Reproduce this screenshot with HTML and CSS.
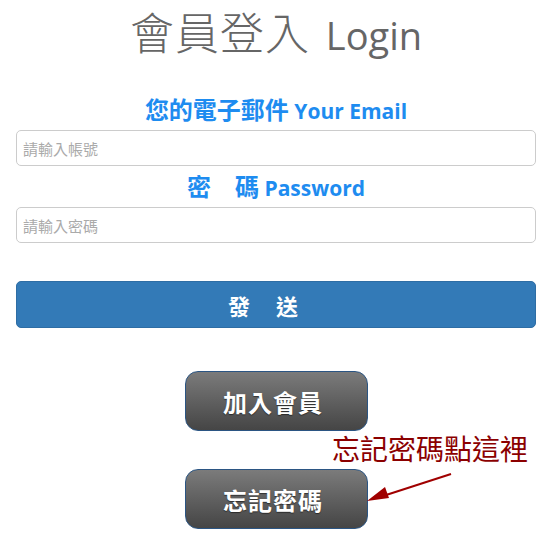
FILE: index.html
```html
<!DOCTYPE html>
<html lang="zh-Hant">
<head>
<meta charset="utf-8">
<title>會員登入</title>
<link rel="stylesheet" href="styles.css">
</head>
<body>
<div class="page">
  <h1 class="title"><span class="cjk">會員登入</span> Login</h1>
  <form class="form">
    <label class="label" for="email"><span class="cjk">您的電子郵件</span> Your Email</label>
    <input class="field field-email" id="email" type="text" placeholder="請輸入帳號">
    <label class="label label-pass" for="pass"><span class="cjk">密　碼</span> Password</label>
    <input class="field field-pass" id="pass" type="password" placeholder="請輸入密碼">
    <button class="send" type="button">發　送</button>
  </form>
  <div class="actions">
    <button class="gray-btn" type="button">加入會員</button>
    <div class="hint">忘記密碼點這裡</div>
    <button class="gray-btn" type="button">忘記密碼</button>
    <svg class="arrow" width="90" height="40" viewBox="0 0 90 40">
      <line x1="84" y1="3" x2="16" y2="25" stroke="#a00000" stroke-width="2"/>
      <polygon points="0,30 18,16 22,27" fill="#a00000"/>
    </svg>
  </div>
</div>
</body>
</html>
```
FILE: styles.css
```css
* { box-sizing: border-box; }
html, body { margin: 0; padding: 0; background: #fff; }
body {
  font-family: "Open Sans", "Noto Sans CJK TC", sans-serif;
}
.page {
  width: 520px;
  margin-left: 16px;
  padding-top: 11px;
  padding-bottom: 18px;
}
.title {
  margin: 0;
  height: 48px;
  text-align: center;
  font-size: 38px;
  line-height: 44px;
  font-weight: 400;
  color: #666;
}
.title .cjk {
  font-size: 44px;
  font-weight: 300;
  letter-spacing: 1px;
  margin-right: 6px;
}
.form {
  display: flex;
  flex-direction: column;
}
.label {
  display: block;
  height: 28px;
  text-align: center;
  font-size: 21px;
  line-height: 26px;
  font-weight: 700;
  color: #1e8cf0;
  margin-top: 38px;
}
.label .cjk { font-size: 24px; }
.label-pass { margin-top: 8px; }
.field {
  display: block;
  width: 520px;
  height: 36px;
  margin-top: 5px;
  padding: 0 6px;
  border: 1px solid #ccc;
  border-radius: 5px;
  font-family: "Noto Sans CJK TC", sans-serif;
  font-size: 15px;
  color: #555;
  background: #fff;
  outline: none;
}
.field-pass { margin-top: 5px; }
.field::placeholder { color: #aaa; }
.send {
  display: block;
  width: 520px;
  height: 47px;
  margin-top: 38px;
  border: 1px solid #2e6da4;
  border-radius: 5px;
  background: #337ab7;
  color: #fff;
  font-family: "Noto Sans CJK TC", sans-serif;
  font-size: 22px;
  font-weight: 700;
  letter-spacing: 2px;
  padding: 0 24px 0 0;
}
.actions {
  position: relative;
  display: flex;
  flex-direction: column;
  align-items: center;
  margin-top: 43px;
}
.gray-btn {
  width: 183px;
  height: 60px;
  border: 1px solid #2b5583;
  border-radius: 13px;
  background: linear-gradient(#7b7b7b, #454545);
  color: #fff;
  font-family: "Noto Sans CJK TC", sans-serif;
  font-size: 24px;
  font-weight: 700;
  letter-spacing: 1px;
  text-shadow: 0 1px 1px rgba(0,0,0,0.5);
  padding: 0 6px 0 0;
}
.hint {
  align-self: flex-end;
  height: 38px;
  padding-right: 8px;
  font-family: "Noto Sans CJK TC", sans-serif;
  font-size: 28px;
  line-height: 34px;
  color: #8b0000;
}
.arrow {
  position: absolute;
  left: 351px;
  top: 100px;
}
```
